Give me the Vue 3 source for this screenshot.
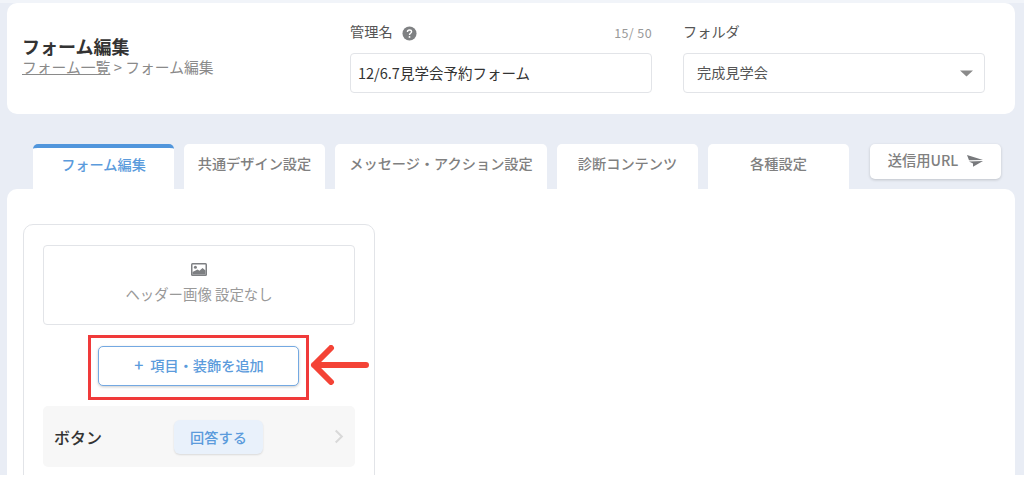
<script setup>
const tabs = [
  { label: 'フォーム編集', active: true, w: 141 },
  { label: '共通デザイン設定', w: 141 },
  { label: 'メッセージ・アクション設定', w: 212 },
  { label: '診断コンテンツ', w: 141 },
  { label: '各種設定', w: 141 }
]
</script>

<template>
  <div class="page">
    <header class="head">
      <div class="title-col">
        <h1 class="title">フォーム編集</h1>
        <p class="crumb"><a class="crumb-link">フォーム一覧</a> &gt; フォーム編集</p>
      </div>
      <div class="field name-field">
        <div class="label-row">
          <span class="label">管理名</span>
          <svg class="help" viewBox="0 0 16 16" width="15" height="15">
            <circle cx="8" cy="8" r="7.5" fill="#7f8183" />
            <path d="M5.8 6.3C5.800 5 6.800 4.200 8 4.200s2.200.8 2.200 1.900c0 1.700-2.200 1.700-2.200 3.400" fill="none" stroke="#fff" stroke-width="1.500" />
            <circle cx="8" cy="11.600" r="1" fill="#fff" />
          </svg>
          <span class="count">15/ 50</span>
        </div>
        <div class="box">12/6.7見学会予約フォーム</div>
      </div>
      <div class="field folder-field">
        <div class="label-row"><span class="label">フォルダ</span></div>
        <div class="box select">
          <span>完成見学会</span>
          <svg class="caret" viewBox="0 0 13 7" width="13" height="7"><path d="M0 .5h13L6.500 6.500z" fill="#8a8a8a" /></svg>
        </div>
      </div>
    </header>

    <nav class="tabs">
      <div
        v-for="t in tabs"
        :key="t.label"
        class="tab"
        :class="{ active: t.active }"
        :style="{ width: t.w + 'px' }"
      >{{ t.label }}</div>
      <button class="send">
        送信用URL
        <svg viewBox="0 0 16 12" width="16" height="12"><path d="M0 0 16 5 2 5.300zM2 6.500 16 6 6 11.800 6 8.500z" fill="#77797c" /></svg>
      </button>
    </nav>

    <main class="main">
      <section class="panel">
        <div class="hero">
          <svg viewBox="0 0 16 13" width="16" height="13">
            <rect x="0" y="0" width="16" height="13" rx="1.500" fill="#7d7f82" />
            <rect x="1.500" y="1.500" width="13" height="10" fill="#fff" />
            <circle cx="4.400" cy="4.200" r="1.500" fill="#7d7f82" />
            <path d="M1.500 9 6.500 6.500l2 1.300L11.500 5l3 2.500v4h-13z" fill="#7d7f82" />
          </svg>
          <span>ヘッダー画像 設定なし</span>
        </div>
        <div class="add-wrap">
          <div class="highlight">
            <button class="add"><span class="plus">+</span>項目・装飾を追加</button>
          </div>
          <svg class="arrow" viewBox="0 0 60 40" width="60" height="40">
            <path d="M4 20H56M21 3 4 20l17 17" fill="none" stroke="#f44336" stroke-width="6" stroke-linecap="round" stroke-linejoin="round" />
          </svg>
        </div>
        <div class="row">
          <span class="row-name">ボタン</span>
          <span class="pill">回答する</span>
          <svg class="chev" viewBox="0 0 10 16" width="10" height="15"><path d="M1.500 1.500 8 8l-6.500 6.500" fill="none" stroke="#d9d9d9" stroke-width="2.200" /></svg>
        </div>
      </section>
    </main>
  </div>
</template>

<style>
html, body { margin: 0; background: #fff; }
</style>

<style scoped>
.page {
  width: 1024px;
  height: 475px;
  box-sizing: border-box;
  padding: 3px 9px 0 7px;
  overflow: hidden;
  background: linear-gradient(#f1f4f9 3px, #e9edf5 3px);
  font-family: "Noto Sans CJK JP", "Noto Sans", sans-serif;
  color: #333;
}
.head {
  height: 111px;
  background: #fff;
  border-radius: 10px;
  display: flex;
  align-items: flex-start;
}
.title-col { width: 343px; padding: 33px 0 0 15px; box-sizing: border-box; }
.title { margin: 0; font-size: 18px; line-height: 21px; font-weight: 700; color: #333; }
.crumb { margin: 0; font-size: 14.800px; line-height: 20px; color: #8a8a8a; }
.crumb-link { text-decoration: underline; }
.field { display: flex; flex-direction: column; }
.name-field { width: 302px; margin-right: 31px; }
.folder-field { width: 302px; }
.label-row { height: 50px; display: flex; align-items: flex-start; padding-top: 18px; box-sizing: border-box; }
.label { font-size: 14.200px; line-height: 20px; color: #555; }
.help { margin: 5px 0 0 9px; }
.count { margin-left: auto; font-size: 12.500px; line-height: 20px; margin-top: 2px; color: #999; letter-spacing: .4px; }
.box {
  height: 40px;
  box-sizing: border-box;
  border: 1px solid #e2e4e8;
  border-radius: 4px;
  padding: 0 7px 2px;
  display: flex;
  align-items: center;
  font-size: 14.500px;
  color: #333;
}
.select { justify-content: space-between; padding: 0 11px 3px 13px; color: #555; font-size: 14.200px; }
.caret { margin-top: 3px; }
.tabs {
  display: flex;
  align-items: flex-start;
  gap: 10px;
  height: 45px;
  margin-top: 30px;
  padding-left: 26px;
}
.tab {
  height: 45px;
  box-sizing: border-box;
  padding-bottom: 8px;
  background: #fff;
  border-radius: 5px 5px 0 0;
  display: flex;
  align-items: center;
  justify-content: center;
  font-size: 14.200px;
  font-weight: 500;
  color: #808080;
}
.tab.active { border-top: 4px solid #5196dc; color: #5b9bdc; padding-bottom: 9px; }
.send {
  margin-left: 11px;
  width: 131px;
  height: 35px;
  border: 0;
  border-radius: 5px;
  background: #fff;
  box-shadow: 0 1px 3px rgba(0, 0, 0, .18);
  font: inherit;
  font-size: 14.300px;
  font-weight: 500;
  color: #808080;
  display: flex;
  align-items: center;
  justify-content: center;
  gap: 9px;
  padding: 0 0 5px;
}
.send svg { margin-top: 3px; }
.main {
  background: #fff;
  border-radius: 10px 10px 0 0;
  height: 300px;
  padding: 35px 0 0 16px;
  box-sizing: border-box;
}
.panel {
  width: 352px;
  height: 270px;
  box-sizing: border-box;
  border: 1px solid #e2e4e8;
  border-radius: 10px;
  padding: 20px 19px 0;
}
.hero {
  height: 80px;
  box-sizing: border-box;
  border: 1px solid #e2e4e8;
  border-radius: 4px;
  display: flex;
  flex-direction: column;
  align-items: center;
  padding-top: 17px;
  gap: 8px;
  font-size: 14.400px;
  line-height: 20px;
  color: #999;
}
.add-wrap { position: relative; display: flex; justify-content: center; height: 81px; }
.highlight {
  margin: 10px 0 0 -2px;
  width: 221px;
  height: 65px;
  box-sizing: border-box;
  border: 3px solid #f03a3a;
  padding: 8px 0 0 7px;
}
.add {
  display: block;
  width: 201px;
  height: 40px;
  background: #fff;
  border: 1.500px solid #74a9e2;
  border-radius: 5px;
  box-shadow: 0 1px 3px rgba(0, 0, 0, .2);
  font: inherit;
  font-size: 14.200px;
  font-weight: 500;
  color: #5b9bdc;
  padding: 0 0 4px 2px;
}
.plus { margin-right: 7px; font-size: 16px; }
.arrow { position: absolute; left: 267px; top: 20px; }
.row {
  height: 61px;
  background: #f7f7f7;
  border-radius: 5px;
  display: flex;
  align-items: center;
  padding: 0 11px;
}
.row-name { width: 120px; font-size: 16px; font-weight: 500; color: #333; }
.pill {
  width: 89px;
  height: 34px;
  background: #e9f1fb;
  border-radius: 6px;
  box-shadow: 0 1px 2px rgba(0, 0, 0, .12);
  display: flex;
  align-items: center;
  justify-content: center;
  font-size: 14.200px;
  font-weight: 500;
  color: #5b9bdc;
}
.chev { margin-left: auto; }
</style>
